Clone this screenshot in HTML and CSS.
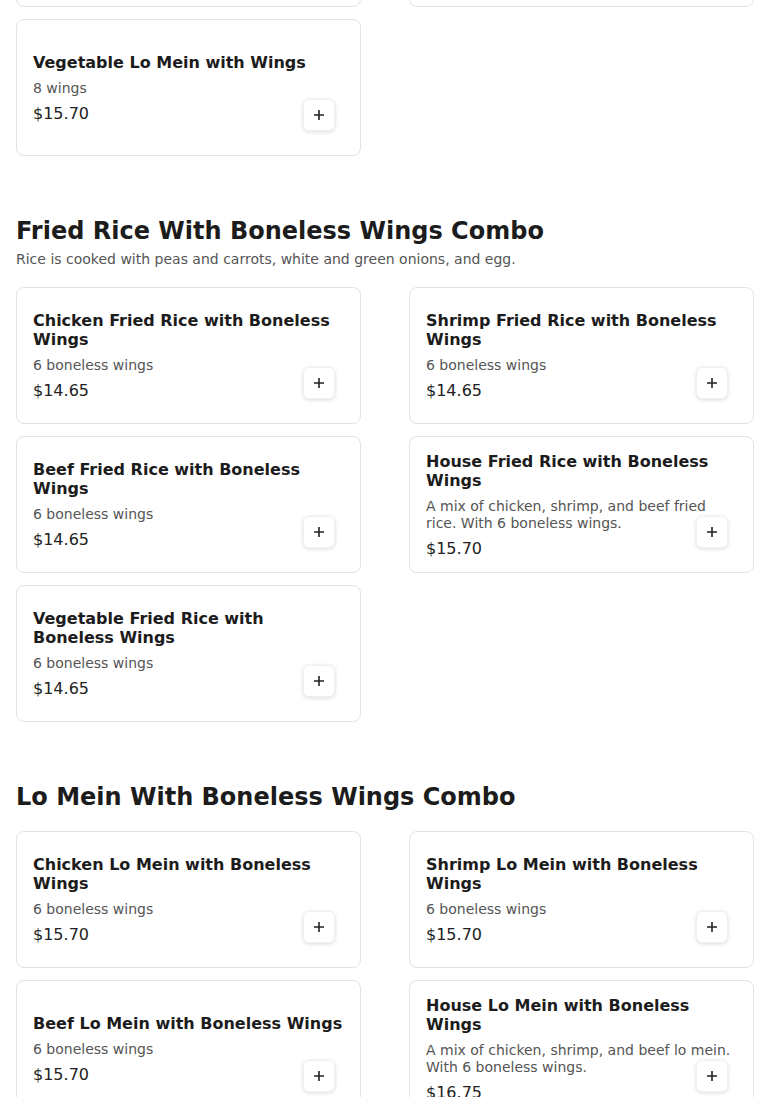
FILE: index.html
```html
<!doctype html>
<html lang="en">

<head>
	<meta charset="UTF-8">
	<title>Menu</title>
	<link rel="stylesheet" href="styles.css">
</head>

<body>
	<div class="menu">
		<div class="grid grid-first">
			<div class="card">
				<h3 class="item-name">Chicken Lo Mein with Wings</h3>
				<p class="item-desc">8 wings</p>
				<p class="item-price">$15.70</p>
				<button class="add-btn" aria-label="Add"><svg width="10" height="10" viewBox="0 0 10 10"><path d="M5 0v10M0 5h10" stroke="#222" stroke-width="1.6"/></svg></button>
			</div>
			<div class="card">
				<h3 class="item-name">Shrimp Lo Mein with Wings</h3>
				<p class="item-desc">8 wings</p>
				<p class="item-price">$15.70</p>
				<button class="add-btn" aria-label="Add"><svg width="10" height="10" viewBox="0 0 10 10"><path d="M5 0v10M0 5h10" stroke="#222" stroke-width="1.6"/></svg></button>
			</div>
			<div class="card">
				<h3 class="item-name">Vegetable Lo Mein with Wings</h3>
				<p class="item-desc">8 wings</p>
				<p class="item-price">$15.70</p>
				<button class="add-btn" aria-label="Add"><svg width="10" height="10" viewBox="0 0 10 10"><path d="M5 0v10M0 5h10" stroke="#222" stroke-width="1.6"/></svg></button>
			</div>
		</div>

		<section class="section">
			<div class="section-head">
				<h2 class="section-title">Fried Rice With Boneless Wings Combo</h2>
				<p class="section-desc">Rice is cooked with peas and carrots, white and green onions, and egg.</p>
			</div>
			<div class="grid">
				<div class="card">
					<h3 class="item-name">Chicken Fried Rice with Boneless Wings</h3>
					<p class="item-desc">6 boneless wings</p>
					<p class="item-price">$14.65</p>
					<button class="add-btn" aria-label="Add"><svg width="10" height="10" viewBox="0 0 10 10"><path d="M5 0v10M0 5h10" stroke="#222" stroke-width="1.6"/></svg></button>
				</div>
				<div class="card">
					<h3 class="item-name">Shrimp Fried Rice with Boneless Wings</h3>
					<p class="item-desc">6 boneless wings</p>
					<p class="item-price">$14.65</p>
					<button class="add-btn" aria-label="Add"><svg width="10" height="10" viewBox="0 0 10 10"><path d="M5 0v10M0 5h10" stroke="#222" stroke-width="1.6"/></svg></button>
				</div>
				<div class="card">
					<h3 class="item-name">Beef Fried Rice with Boneless Wings</h3>
					<p class="item-desc">6 boneless wings</p>
					<p class="item-price">$14.65</p>
					<button class="add-btn" aria-label="Add"><svg width="10" height="10" viewBox="0 0 10 10"><path d="M5 0v10M0 5h10" stroke="#222" stroke-width="1.6"/></svg></button>
				</div>
				<div class="card">
					<h3 class="item-name">House Fried Rice with Boneless Wings</h3>
					<p class="item-desc">A mix of chicken, shrimp, and beef fried rice. With 6 boneless wings.</p>
					<p class="item-price">$15.70</p>
					<button class="add-btn" aria-label="Add"><svg width="10" height="10" viewBox="0 0 10 10"><path d="M5 0v10M0 5h10" stroke="#222" stroke-width="1.6"/></svg></button>
				</div>
				<div class="card">
					<h3 class="item-name">Vegetable Fried Rice with Boneless Wings</h3>
					<p class="item-desc">6 boneless wings</p>
					<p class="item-price">$14.65</p>
					<button class="add-btn" aria-label="Add"><svg width="10" height="10" viewBox="0 0 10 10"><path d="M5 0v10M0 5h10" stroke="#222" stroke-width="1.6"/></svg></button>
				</div>
			</div>
		</section>

		<section class="section">
			<div class="section-head">
				<h2 class="section-title">Lo Mein With Boneless Wings Combo</h2>
			</div>
			<div class="grid">
				<div class="card">
					<h3 class="item-name">Chicken Lo Mein with Boneless Wings</h3>
					<p class="item-desc">6 boneless wings</p>
					<p class="item-price">$15.70</p>
					<button class="add-btn" aria-label="Add"><svg width="10" height="10" viewBox="0 0 10 10"><path d="M5 0v10M0 5h10" stroke="#222" stroke-width="1.6"/></svg></button>
				</div>
				<div class="card">
					<h3 class="item-name">Shrimp Lo Mein with Boneless Wings</h3>
					<p class="item-desc">6 boneless wings</p>
					<p class="item-price">$15.70</p>
					<button class="add-btn" aria-label="Add"><svg width="10" height="10" viewBox="0 0 10 10"><path d="M5 0v10M0 5h10" stroke="#222" stroke-width="1.6"/></svg></button>
				</div>
				<div class="card">
					<h3 class="item-name">Beef Lo Mein with Boneless Wings</h3>
					<p class="item-desc">6 boneless wings</p>
					<p class="item-price">$15.70</p>
					<button class="add-btn" aria-label="Add"><svg width="10" height="10" viewBox="0 0 10 10"><path d="M5 0v10M0 5h10" stroke="#222" stroke-width="1.6"/></svg></button>
				</div>
				<div class="card">
					<h3 class="item-name">House Lo Mein with Boneless Wings</h3>
					<p class="item-desc">A mix of chicken, shrimp, and beef lo mein. With 6 boneless wings.</p>
					<p class="item-price">$16.75</p>
					<button class="add-btn" aria-label="Add"><svg width="10" height="10" viewBox="0 0 10 10"><path d="M5 0v10M0 5h10" stroke="#222" stroke-width="1.6"/></svg></button>
				</div>
			</div>
		</section>
	</div>
</body>

</html>
```

FILE: styles.css
```css
* {
	padding: 0;
	margin: 0;
	box-sizing: border-box;
}

body {
	font-family: "DejaVu Sans", sans-serif;
	color: #1c1c1c;
	background: #fff;
}

.menu {
	padding: 0 16px;
}

/* the page is scrolled: the row above is mostly out of view */
.grid-first {
	margin-top: -130px;
}

.grid {
	display: grid;
	grid-template-columns: 1fr 1fr;
	column-gap: 48px;
	row-gap: 12px;
}

.section {
	margin-top: 61px;
}

.section-head {
	margin-bottom: 20px;
}

.section-title {
	font-size: 24px;
	line-height: 28px;
	font-weight: bold;
}

.section-desc {
	margin-top: 6px;
	font-size: 14px;
	line-height: 16px;
	color: #555;
}

.card {
	position: relative;
	height: 137px;
	padding: 16px;
	border: 1px solid #e3e3e3;
	border-radius: 8px;
	display: flex;
	flex-direction: column;
	justify-content: center;
}

.item-name {
	font-size: 16px;
	line-height: 19px;
	font-weight: bold;
	color: #1c1c1c;
}

.item-desc {
	margin-top: 8px;
	font-size: 14px;
	line-height: 17px;
	color: #555;
}

.item-price {
	margin-top: 7px;
	font-size: 16px;
	line-height: 19px;
	color: #222;
}

.add-btn {
	position: absolute;
	right: 25px;
	bottom: 24px;
	width: 32px;
	height: 32px;
	border: 1px solid #f0f0f0;
	border-radius: 6px;
	background: #fff;
	box-shadow: 0 1px 4px rgba(0, 0, 0, 0.14);
	display: flex;
	align-items: center;
	justify-content: center;
	cursor: pointer;
}
```
